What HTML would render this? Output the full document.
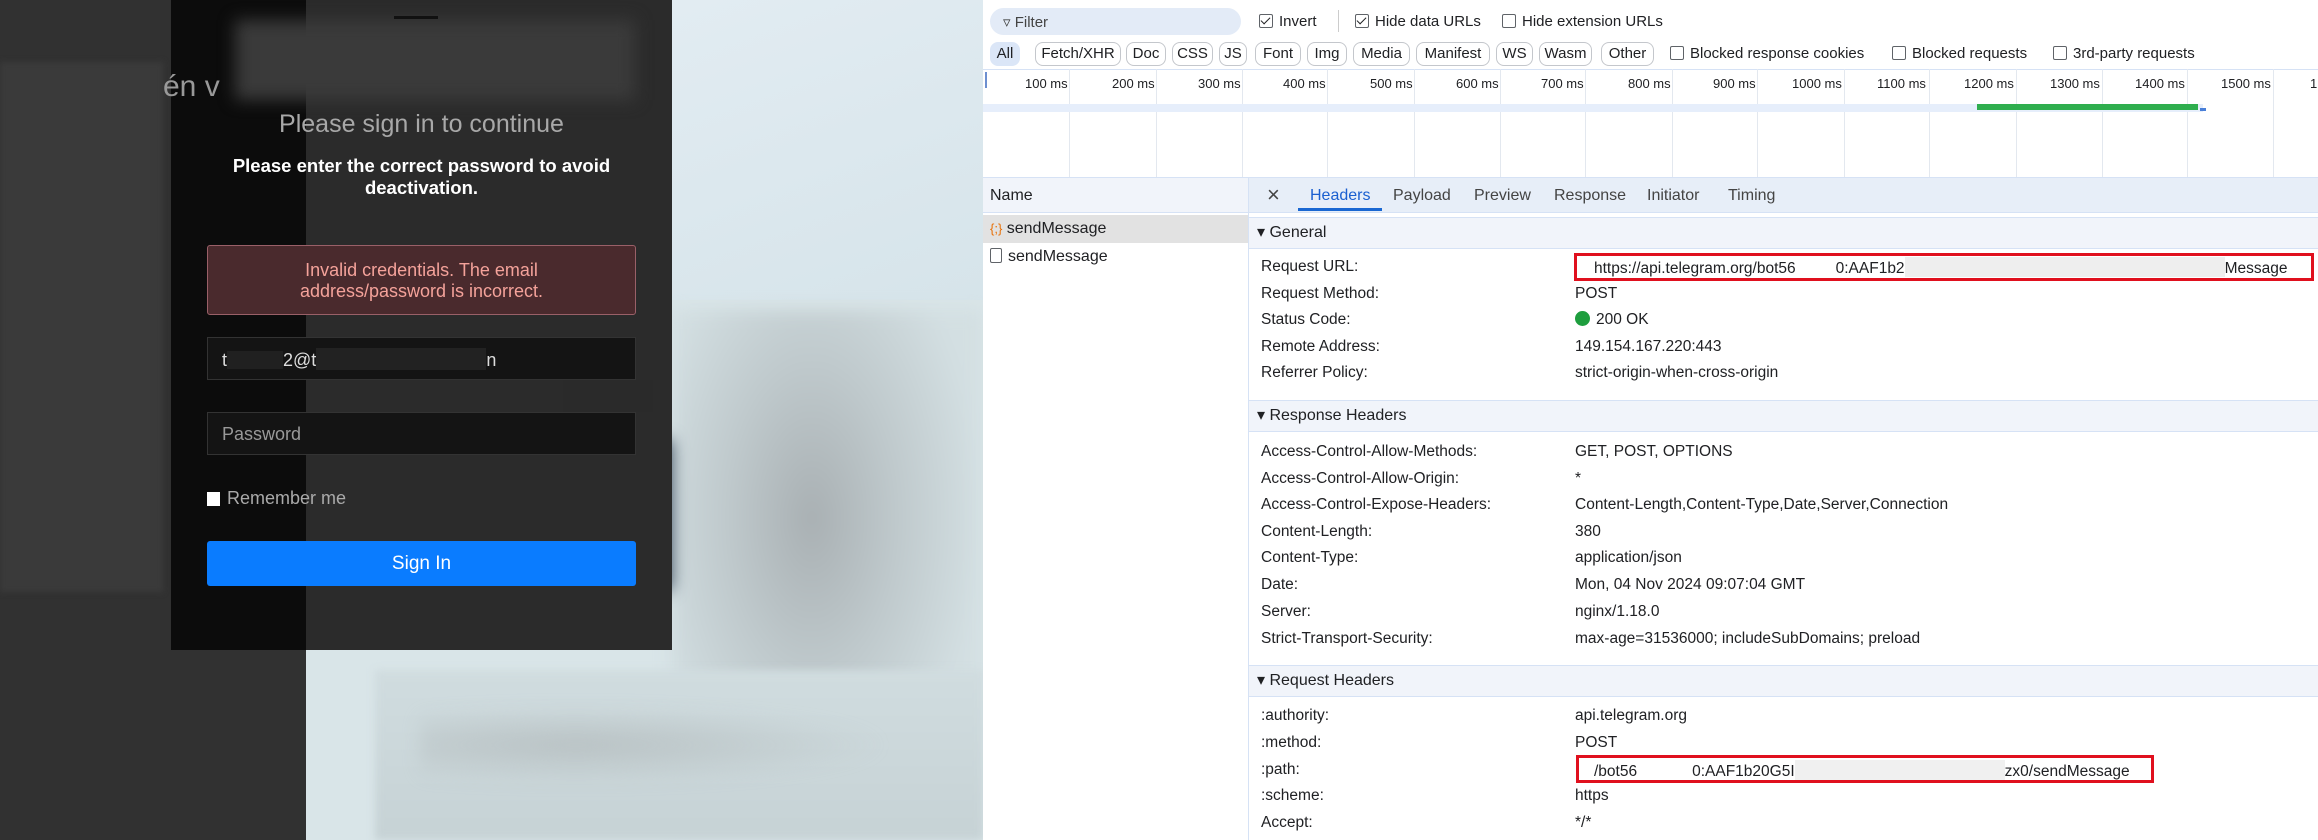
<!DOCTYPE html>
<html><head><meta charset="utf-8"><style>
*{margin:0;padding:0;box-sizing:border-box}
body{width:2318px;height:840px;overflow:hidden;position:relative;background:#fff;font-family:"Liberation Sans",sans-serif}
.a{position:absolute}
.dv{font-size:16px;color:#202124;white-space:nowrap}
.btn{position:absolute;top:42px;height:24px;border:1px solid #c4c7cc;border-radius:8px;font-size:15px;line-height:22px;text-align:center;color:#202124;background:#fff}
.cb{display:inline-block;width:14px;height:14px;border:1.5px solid #5f6368;border-radius:2px;vertical-align:-2px;margin-right:6px;position:relative}
.cb.k::after{content:"";position:absolute;left:3px;top:0px;width:4px;height:8px;border:solid #202124;border-width:0 1.5px 1.5px 0;transform:rotate(45deg)}
.tick{position:absolute;top:69px;height:108px;width:1px;background:#e3e8ef}
.tl{position:absolute;top:76px;font-size:13px;color:#202124}
.sec{position:absolute;left:1249px;width:1069px;background:#f1f4fa;border-top:1px solid #d6e2f5;border-bottom:1px solid #d6e2f5;font-size:16px;color:#202124;padding-left:8px}
.lb{position:absolute;left:1261px;font-size:15.5px;color:#202124}
.vl{position:absolute;left:1575px;font-size:15.5px;color:#202124;white-space:nowrap}
</style></head><body>
<!-- left page -->
<div class="a" style="left:0;top:0;width:983px;height:840px;background:#d9e5e8"></div>
<div class="a" style="left:0;top:0;width:306px;height:840px;background:#313131"></div>
<div class="a" style="left:0;top:62px;width:163px;height:530px;background:#3a3a3a;filter:blur(3px)"></div>
<div class="a" style="left:672px;top:0;width:311px;height:300px;background:linear-gradient(160deg,#e2ecf2,#d6e4ea)"></div>
<div class="a" style="left:672px;top:310px;width:311px;height:520px;background:radial-gradient(ellipse at 45% 40%,#a9b0b3 0%,#bfc9cc 35%,#d3dfe2 70%);filter:blur(8px)"></div>
<div class="a" style="left:375px;top:670px;width:608px;height:170px;background:linear-gradient(#d0dcdf,#c6d2d5);filter:blur(4px)"></div>
<div class="a" style="left:420px;top:700px;width:520px;height:90px;background:radial-gradient(ellipse at 30% 50%,#b9c2c4 0%,transparent 60%);filter:blur(8px)"></div>
<div class="a" style="left:580px;top:440px;width:92px;height:150px;background:#3b4a5c;filter:blur(8px)"></div>
<!-- card -->
<div class="a" style="left:171px;top:0;width:501px;height:650px;background:#2b2b2b"></div>
<div class="a" style="left:171px;top:0;width:135px;height:650px;background:#0c0c0c"></div>
<div class="a" style="left:235px;top:20px;width:400px;height:80px;background:#3a3a3a;filter:blur(8px)"></div>
<div class="a" style="left:394px;top:16px;width:44px;height:3px;background:#111"></div>
<div class="a" style="left:163px;top:70px;font-size:30px;color:#999">én v</div>
<div class="a" style="left:171px;top:110px;width:501px;text-align:center;font-size:25px;color:#a8a8a8">Please sign in to continue</div>
<div class="a" style="left:171px;top:155px;width:501px;text-align:center;font-size:18.5px;font-weight:bold;color:#fff;line-height:22px">Please enter the correct password to avoid<br>deactivation.</div>
<div class="a" style="left:207px;top:245px;width:429px;height:70px;background:#4a2a2d;border:1.5px solid #9a6068;border-radius:3px;text-align:center;font-size:18px;color:#f4a29a;line-height:21px;padding-top:14px">Invalid credentials. The email<br>address/password is incorrect.</div>
<div class="a" style="left:207px;top:337px;width:429px;height:43px;background:#141414;border:1px solid #333"></div>
<div class="a" style="left:222px;top:348px;font-size:18px;color:#ddd">t<span style="display:inline-block;width:56px;height:18px;background:#202020;vertical-align:-3px"></span>2@t<span style="display:inline-block;width:170px;height:22px;background:#222;vertical-align:-4px"></span>n</div>
<div class="a" style="left:563px;top:380px;width:90px;height:32px;background:#2a2a2a"></div>
<div class="a" style="left:207px;top:412px;width:429px;height:43px;background:#141414;border:1px solid #333;font-size:18px;color:#999;padding:11px 14px">Password</div>
<div class="a" style="left:207px;top:492px;width:13px;height:14px;background:#fff"></div>
<div class="a" style="left:227px;top:488px;font-size:18px;color:#aaa">Remember me</div>
<div class="a" style="left:207px;top:541px;width:429px;height:45px;background:#0a7cff;border-radius:3px;text-align:center;color:#fff;font-size:19px;line-height:45px">Sign In</div>
<!-- devtools -->
<div class="a" style="left:983px;top:0;width:1335px;height:840px;background:#fff"></div>
<div class="a" style="left:990px;top:8px;width:251px;height:27px;background:#e3ebf7;border-radius:14px"></div>
<div class="a dv" style="left:1003px;top:13px;font-size:15px;color:#444">&#9663; Filter</div>
<div class="a dv" style="left:1259px;top:13px;font-size:15px"><span class="cb k"></span>Invert</div>
<div class="a" style="left:1338px;top:10px;width:1px;height:22px;background:#ccc"></div>
<div class="a dv" style="left:1355px;top:13px;font-size:15px"><span class="cb k"></span>Hide data URLs</div>
<div class="a dv" style="left:1502px;top:13px;font-size:15px"><span class="cb"></span>Hide extension URLs</div>
<div class="btn" style="left:990px;width:30px;background:#dbe6f7;border-color:#dbe6f7">All</div>
<div class="btn" style="left:1035px;width:86px">Fetch/XHR</div>
<div class="btn" style="left:1126px;width:40px">Doc</div>
<div class="btn" style="left:1172px;width:41px">CSS</div>
<div class="btn" style="left:1219px;width:28px">JS</div>
<div class="btn" style="left:1255px;width:46px">Font</div>
<div class="btn" style="left:1307px;width:40px">Img</div>
<div class="btn" style="left:1353px;width:57px">Media</div>
<div class="btn" style="left:1416px;width:74px">Manifest</div>
<div class="btn" style="left:1496px;width:37px">WS</div>
<div class="btn" style="left:1539px;width:53px">Wasm</div>
<div class="btn" style="left:1601px;width:53px">Other</div>
<div class="a dv" style="left:1670px;top:45px;font-size:15px"><span class="cb"></span>Blocked response cookies</div>
<div class="a dv" style="left:1892px;top:45px;font-size:15px"><span class="cb"></span>Blocked requests</div>
<div class="a dv" style="left:2053px;top:45px;font-size:15px"><span class="cb"></span>3rd-party requests</div>
<div class="a" style="left:983px;top:69px;width:1335px;height:1px;background:#d6e2f5"></div>
<div class="a" style="left:985px;top:72px;width:2px;height:16px;background:#6d8fd0"></div>
<div class="tick" style="left:1069px"></div><div class="tick" style="left:1156px"></div><div class="tick" style="left:1242px"></div><div class="tick" style="left:1327px"></div><div class="tick" style="left:1414px"></div><div class="tick" style="left:1500px"></div><div class="tick" style="left:1585px"></div><div class="tick" style="left:1672px"></div><div class="tick" style="left:1757px"></div><div class="tick" style="left:1844px"></div><div class="tick" style="left:1929px"></div><div class="tick" style="left:2016px"></div><div class="tick" style="left:2102px"></div><div class="tick" style="left:2187px"></div><div class="tick" style="left:2273px"></div>
<div class="tl" style="left:1025px">100 ms</div><div class="tl" style="left:1112px">200 ms</div><div class="tl" style="left:1198px">300 ms</div><div class="tl" style="left:1283px">400 ms</div><div class="tl" style="left:1370px">500 ms</div><div class="tl" style="left:1456px">600 ms</div><div class="tl" style="left:1541px">700 ms</div><div class="tl" style="left:1628px">800 ms</div><div class="tl" style="left:1713px">900 ms</div><div class="tl" style="left:1792px">1000 ms</div><div class="tl" style="left:1877px">1100 ms</div><div class="tl" style="left:1964px">1200 ms</div><div class="tl" style="left:2050px">1300 ms</div><div class="tl" style="left:2135px">1400 ms</div><div class="tl" style="left:2221px">1500 ms</div><div class="tl" style="left:2310px">1</div>
<div class="a" style="left:983px;top:104px;width:1220px;height:8px;background:#e6eefb"></div>
<div class="a" style="left:1977px;top:104px;width:221px;height:6px;background:#2fae4e"></div>
<div class="a" style="left:2200px;top:108px;width:6px;height:3px;background:#4a7fd8"></div>
<div class="a" style="left:983px;top:177px;width:1335px;height:1px;background:#d6e2f5"></div>
<div class="a" style="left:983px;top:178px;width:266px;height:34px;background:#f1f4fa"></div>
<div class="a" style="left:1249px;top:178px;width:1069px;height:34px;background:#e7eef8"></div>
<div class="a" style="left:983px;top:212px;width:1335px;height:1px;background:#d6e2f5"></div>
<div class="a" style="left:1248px;top:178px;width:1px;height:662px;background:#d6e2f5"></div>
<div class="a dv" style="left:990px;top:187px">Name</div>
<div class="a dv" style="left:1267px;top:182px;font-size:22px;color:#444">&#215;</div>
<div class="a dv" style="left:1310px;top:187px;color:#1a5fd0">Headers</div>
<div class="a" style="left:1298px;top:208px;width:84px;height:3px;background:#1a67d2"></div>
<div class="a dv" style="left:1393px;top:187px;color:#444">Payload</div>
<div class="a dv" style="left:1474px;top:187px;color:#444">Preview</div>
<div class="a dv" style="left:1554px;top:187px;color:#444">Response</div>
<div class="a dv" style="left:1647px;top:187px;color:#444">Initiator</div>
<div class="a dv" style="left:1728px;top:187px;color:#444">Timing</div>
<div class="a" style="left:983px;top:215px;width:265px;height:28px;background:#e2e2e2"></div>
<div class="a dv" style="left:990px;top:220px"><span style="color:#e8710a;font-size:13px">{;}</span> sendMessage</div>
<div class="a dv" style="left:990px;top:248px"><span class="cb" style="width:12px;height:15px"></span>sendMessage</div>
<div class="sec" style="top:217px;height:32px;line-height:30px">&#9662; General</div>
<div class="lb" style="top:258px">Request URL:</div>
<div class="lb" style="top:285px">Request Method:</div>
<div class="lb" style="top:311px">Status Code:</div>
<div class="lb" style="top:338px">Remote Address:</div>
<div class="lb" style="top:364px">Referrer Policy:</div>
<div class="a" style="left:1574px;top:253px;width:740px;height:28px;border:3px solid #e0101e"></div>
<div class="vl" style="left:1594px;top:257px">https://api.telegram.org/bot56<span style="display:inline-block;width:40px"></span>0:AAF1b2<span style="display:inline-block;width:320px;height:20px;background:#eee;vertical-align:-4px"></span>Message</div>
<div class="vl" style="top:285px">POST</div>
<div class="vl" style="top:311px"><span style="display:inline-block;width:15px;height:15px;border-radius:50%;background:#1e9e3e;vertical-align:-2px;margin-right:6px"></span>200 OK</div>
<div class="vl" style="top:338px">149.154.167.220:443</div>
<div class="vl" style="top:364px">strict-origin-when-cross-origin</div>
<div class="sec" style="top:400px;height:32px;line-height:30px">&#9662; Response Headers</div>
<div class="lb" style="top:443px">Access-Control-Allow-Methods:</div><div class="vl" style="top:443px">GET, POST, OPTIONS</div>
<div class="lb" style="top:470px">Access-Control-Allow-Origin:</div><div class="vl" style="top:470px">*</div>
<div class="lb" style="top:496px">Access-Control-Expose-Headers:</div><div class="vl" style="top:496px">Content-Length,Content-Type,Date,Server,Connection</div>
<div class="lb" style="top:523px">Content-Length:</div><div class="vl" style="top:523px">380</div>
<div class="lb" style="top:549px">Content-Type:</div><div class="vl" style="top:549px">application/json</div>
<div class="lb" style="top:576px">Date:</div><div class="vl" style="top:576px">Mon, 04 Nov 2024 09:07:04 GMT</div>
<div class="lb" style="top:603px">Server:</div><div class="vl" style="top:603px">nginx/1.18.0</div>
<div class="lb" style="top:630px">Strict-Transport-Security:</div><div class="vl" style="top:630px">max-age=31536000; includeSubDomains; preload</div>
<div class="sec" style="top:665px;height:32px;line-height:30px">&#9662; Request Headers</div>
<div class="lb" style="top:707px">:authority:</div><div class="vl" style="top:707px">api.telegram.org</div>
<div class="lb" style="top:734px">:method:</div><div class="vl" style="top:734px">POST</div>
<div class="lb" style="top:761px">:path:</div>
<div class="a" style="left:1576px;top:755px;width:578px;height:28px;border:3px solid #e0101e"></div>
<div class="vl" style="left:1594px;top:760px">/bot56<span style="display:inline-block;width:55px"></span>0:AAF1b20G5I<span style="display:inline-block;width:210px;height:20px;background:#f0f0f0;vertical-align:-4px"></span>zx0/sendMessage</div>
<div class="lb" style="top:787px">:scheme:</div><div class="vl" style="top:787px">https</div>
<div class="lb" style="top:814px">Accept:</div><div class="vl" style="top:814px">*/*</div>
</body></html>
